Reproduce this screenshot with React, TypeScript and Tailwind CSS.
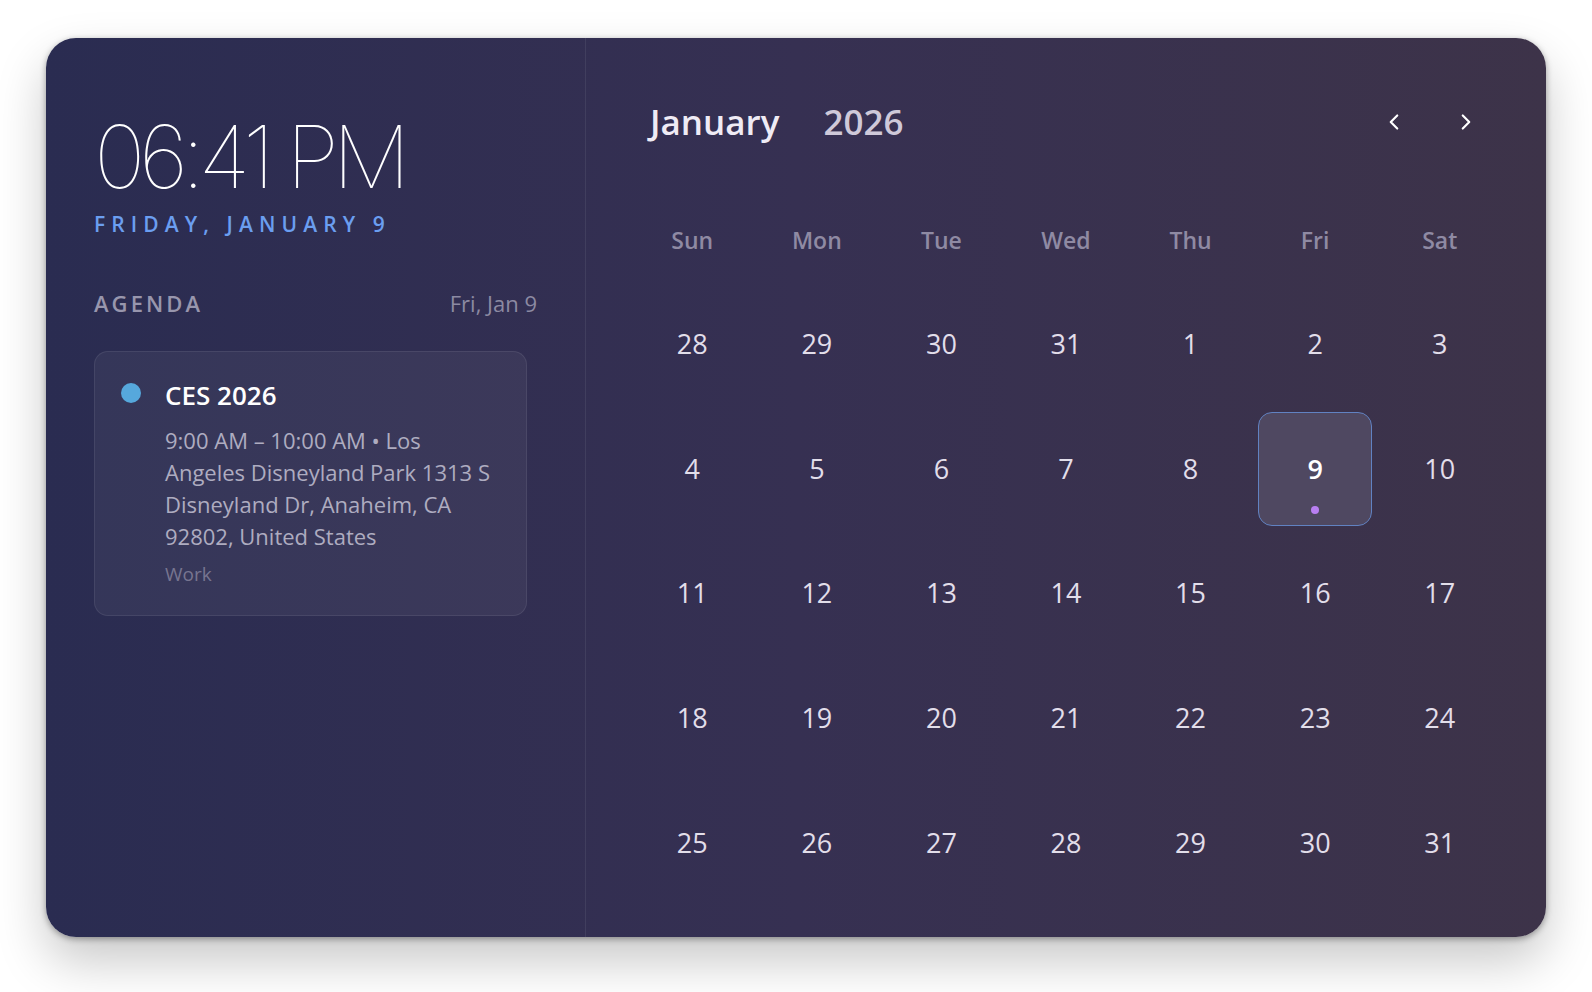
import { ChevronLeft, ChevronRight } from "lucide-react";

const WEEKDAYS = ["Sun", "Mon", "Tue", "Wed", "Thu", "Fri", "Sat"];

// Jan 2026 starts on a Thursday; leading days come from Dec 2025
const DAYS: { day: number; muted?: boolean }[] = [
  28, 29, 30, 31, 1, 2, 3, 4, 5, 6, 7, 8, 9, 10, 11, 12, 13, 14, 15, 16, 17,
  18, 19, 20, 21, 22, 23, 24, 25, 26, 27, 28, 29, 30, 31,
].map((d) => ({ day: d }));

const SELECTED_INDEX = 12;

function DayCell({ day, selected }: { day: number; selected: boolean }) {
  if (selected) {
    return (
      <div className="flex items-center justify-center">
        <div className="relative flex h-[114px] w-[114px] items-center justify-center rounded-[14px] border-[1.5px] border-[#6182c2] bg-[#4f4861] text-[27px] font-semibold text-white">
          9
          <span className="absolute bottom-[11px] left-1/2 h-[8px] w-[8px] -translate-x-1/2 rounded-full bg-[#b97ff2]" />
        </div>
      </div>
    );
  }
  return (
    <div className="flex items-center justify-center text-[27px] text-[#e2deea]">
      {day}
    </div>
  );
}

export default function App() {
  return (
    <div
      className="min-h-screen bg-white px-[46px] pt-[38px]"
      style={{ fontFamily: '"Open Sans", "Noto Sans", sans-serif' }}
    >
      <div className="flex h-[899px] overflow-hidden rounded-[30px] bg-gradient-to-r from-[#2a2c51] via-[#363052] to-[#3d3349] shadow-[0_2px_6px_rgba(0,0,0,0.35),0_24px_50px_rgba(0,0,0,0.22)]">
        {/* left: clock + agenda */}
        <aside className="flex w-[540px] shrink-0 flex-col border-r border-white/[0.07] pl-[48px] pr-[48px] pt-[69px]">
          <div
            className="whitespace-pre text-[87px] font-thin leading-[100px] tracking-[-0.075em] text-white"
            style={{ fontFamily: "Inter, sans-serif" }}
          >
            {"06:41 PM"}
          </div>
          <div className="mt-[5px] text-[21px] font-semibold uppercase leading-[24px] tracking-[0.29em] text-[#6b9ef0]">
            Friday, January 9
          </div>

          <div className="mt-[51px] flex items-baseline justify-between">
            <span className="text-[22px] font-semibold uppercase tracking-[0.14em] text-[#9896ad]">
              Agenda
            </span>
            <span className="text-[22px] text-[#8c8aa2]">Fri, Jan 9</span>
          </div>

          <div className="mt-[31px] flex w-[433px] gap-[24px] rounded-[14px] border border-white/[0.08] bg-white/[0.05] pb-[28px] pl-[26px] pr-[24px] pt-[26px]">
            <span className="mt-[5px] h-[20px] w-[20px] shrink-0 rounded-full bg-[#56a8dc]" />
            <div className="min-w-0">
              <div className="text-[26px] font-semibold leading-[34px] text-white">
                CES 2026
              </div>
              <div className="mt-[12px] text-[22px] leading-[32px] text-[#aeacc0]">
                9:00 AM – 10:00 AM • Los Angeles Disneyland Park 1313 S
                Disneyland Dr, Anaheim, CA 92802, United States
              </div>
              <div className="mt-[9px] text-[19px] leading-[26px] text-[#777590]">
                Work
              </div>
            </div>
          </div>
        </aside>

        {/* right: month grid */}
        <section className="flex flex-1 flex-col px-[44px] pt-[60px]">
          <header className="flex h-[48px] items-center justify-between pl-[20px] pr-[16px]">
            <div className="flex items-baseline gap-[44px] text-[35px] font-semibold">
              <span className="text-[#efebf5]">January</span>
              <span className="text-[#cfc9d9]">2026</span>
            </div>
            <div className="flex items-center gap-[32px] text-white">
              <button type="button" className="flex h-10 w-10 items-center justify-center">
                <ChevronLeft className="size-[26px]" strokeWidth={2} />
              </button>
              <button type="button" className="flex h-10 w-10 items-center justify-center">
                <ChevronRight className="size-[26px]" strokeWidth={2} />
              </button>
            </div>
          </header>

          <div className="mt-[72px] grid h-[44px] grid-cols-7 items-center">
            {WEEKDAYS.map((w) => (
              <div key={w} className="text-center text-[23px] font-semibold text-[#8f8aa3]">
                {w}
              </div>
            ))}
          </div>

          <div className="mt-[20px] grid grid-cols-7 grid-rows-[repeat(5,124.7px)]">
            {DAYS.map((d, i) => (
              <DayCell key={i} day={d.day} selected={i === SELECTED_INDEX} />
            ))}
          </div>
        </section>
      </div>
    </div>
  );
}
